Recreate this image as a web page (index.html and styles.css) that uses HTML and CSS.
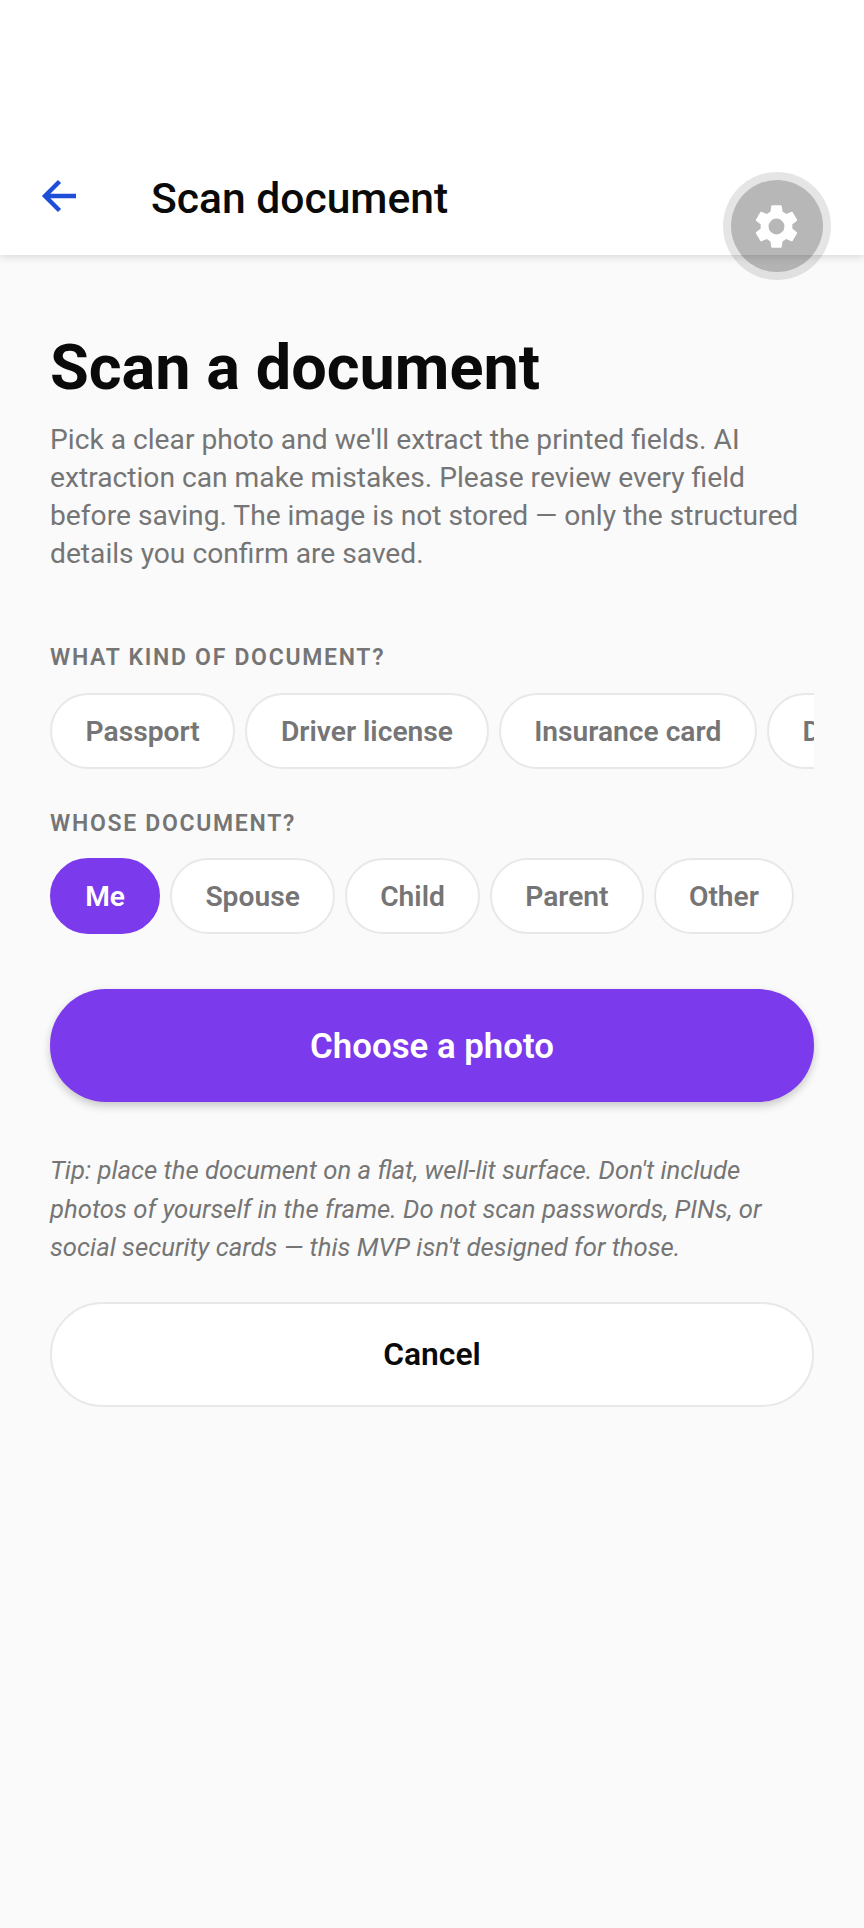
FILE: index.html
```html
<!DOCTYPE html>
<html lang="en">
<head>
  <meta charset="UTF-8" />
  <meta name="viewport" content="width=device-width, initial-scale=1.0" />
  <title>Scan document</title>
  <link rel="stylesheet" href="styles.css">
</head>
<body>
  <header class="topbar">
    <svg class="back-icon" viewBox="0 0 36 34" aria-hidden="true">
      <path d="M18.5 2.5 4 17l14.5 14.5M4 17h31" fill="none" stroke="currentColor" stroke-width="4.4" />
    </svg>
    <div class="topbar-title">Scan document</div>
  </header>

  <main class="content">
    <h1>Scan a document</h1>
    <p class="intro">Pick a clear photo and we'll extract the printed fields. AI extraction can make mistakes. Please review every field before saving. The image is not stored — only the structured details you confirm are saved.</p>

    <div class="label label-kind">WHAT KIND OF DOCUMENT?</div>
    <div class="chips">
      <button class="chip">Passport</button>
      <button class="chip">Driver license</button>
      <button class="chip">Insurance card</button>
      <button class="chip">Document</button>
    </div>

    <div class="label label-whose">WHOSE DOCUMENT?</div>
    <div class="chips chips-whose">
      <button class="chip selected">Me</button>
      <button class="chip">Spouse</button>
      <button class="chip">Child</button>
      <button class="chip">Parent</button>
      <button class="chip">Other</button>
    </div>

    <button class="btn-primary">Choose a photo</button>
    <p class="tip">Tip: place the document on a flat, well-lit surface. Don't include photos of yourself in the frame. Do not scan passwords, PINs, or social security cards — this MVP isn't designed for those.</p>
    <button class="btn-cancel">Cancel</button>
  </main>

  <div class="gear-ring">
    <div class="gear-disc">
      <svg class="gear-icon" viewBox="0 0 24 24" aria-hidden="true">
        <path fill="currentColor" d="M19.14 12.94c.04-.3.06-.61.06-.94s-.02-.64-.07-.94l2.03-1.58a.49.49 0 0 0 .12-.61l-1.92-3.32a.49.49 0 0 0-.59-.22l-2.39.96c-.5-.38-1.03-.7-1.62-.94l-.36-2.54a.48.48 0 0 0-.48-.41h-3.84a.48.48 0 0 0-.47.41l-.36 2.54c-.59.24-1.13.57-1.62.94l-2.39-.96a.48.48 0 0 0-.59.22L2.74 8.87a.47.47 0 0 0 .12.61l2.03 1.58c-.05.3-.09.63-.09.94s.02.64.07.94l-2.03 1.58a.49.49 0 0 0-.12.61l1.92 3.32c.12.22.37.29.59.22l2.39-.96c.5.38 1.03.7 1.62.94l.36 2.54c.05.24.24.41.48.41h3.84c.24 0 .44-.17.47-.41l.36-2.54c.59-.24 1.13-.56 1.62-.94l2.39.96c.22.08.47 0 .59-.22l1.92-3.32a.47.47 0 0 0-.12-.61l-2.01-1.58zM12 15.6A3.6 3.6 0 1 1 12 8.4a3.6 3.6 0 0 1 0 7.2z" />
      </svg>
    </div>
  </div>
</body>
</html>
```

FILE: styles.css
```css
* {
  box-sizing: border-box;
}
html, body {
  height: 100%;
}
body {
  margin: 0;
  font-family: Roboto, "Noto Sans", sans-serif;
  background-color: #fafafa;
  color: #0a0a0a;
  overflow: hidden;
}
button {
  font-family: inherit;
  cursor: pointer;
}

/* top bar */
.topbar {
  height: 255px;
  padding: 146px 0 0 41px;
  display: flex;
  align-items: flex-start;
  background-color: #fff;
  box-shadow: 0 2px 8px rgba(0,0,0,0.14);
}
.back-icon {
  width: 36px;
  height: 34px;
  margin-top: 33px;
  color: #1d4ed8;
}
.topbar-title {
  margin-left: 74px;
  height: 104px;
  font-size: 42.6px;
  line-height: 104px;
  font-weight: 500;
}

/* main column */
.content {
  padding: 0 50px;
}
h1 {
  margin: 74px 0 0;
  font-size: 63px;
  line-height: 78px;
  font-weight: 700;
}
.intro {
  margin: 14px 0 0;
  font-size: 28.2px;
  line-height: 38px;
  color: #757575;
}
.label {
  font-size: 23px;
  line-height: 28px;
  font-weight: 600;
  letter-spacing: 1.7px;
  color: #757575;
}
.label-kind {
  margin-top: 71px;
}
.label-whose {
  margin-top: 41px;
}
.chips {
  display: flex;
  gap: 10px;
  margin-top: 21px;
  overflow: hidden;
}
.chips-whose {
  margin-top: 20px;
}
.chip {
  flex: none;
  height: 76px;
  padding: 0 33.6px;
  border: 2px solid #e8e8e8;
  border-radius: 38px;
  background-color: #fff;
  color: #757575;
  font-size: 28.2px;
  font-weight: 560;
}
.chips-whose .chip {
  padding: 0 33.2px;
}
.chip.selected {
  border-color: #7c3aed;
  background-color: #7c3aed;
  color: #fff;
}
.btn-primary {
  display: block;
  width: 100%;
  height: 113px;
  margin-top: 55px;
  border: none;
  border-radius: 56px;
  background-color: #7c3aed;
  color: #fff;
  font-size: 34.8px;
  font-weight: 650;
  box-shadow: 0 4px 8px rgba(0,0,0,0.2);
}
.tip {
  margin: 49px 0 0;
  font-size: 25.7px;
  line-height: 38.5px;
  font-style: italic;
  color: #757575;
}
.btn-cancel {
  display: block;
  width: 100%;
  height: 105px;
  margin-top: 35px;
  border: 2px solid #e8e8e8;
  border-radius: 53px;
  background-color: #fff;
  color: #0a0a0a;
  font-size: 31.8px;
  font-weight: 560;
}

/* floating settings button, sits over the bar */
.gear-ring {
  position: absolute;
  left: 722.5px;
  top: 172px;
  width: 108px;
  height: 108px;
  padding: 8px;
  border-radius: 50%;
  background-color: rgba(0,0,0,0.1);
}
.gear-disc {
  width: 92px;
  height: 92px;
  border-radius: 50%;
  display: flex;
  align-items: center;
  justify-content: center;
  background-color: rgba(0,0,0,0.2);
}
.gear-icon {
  width: 53px;
  height: 53px;
  color: #fff;
}
```
